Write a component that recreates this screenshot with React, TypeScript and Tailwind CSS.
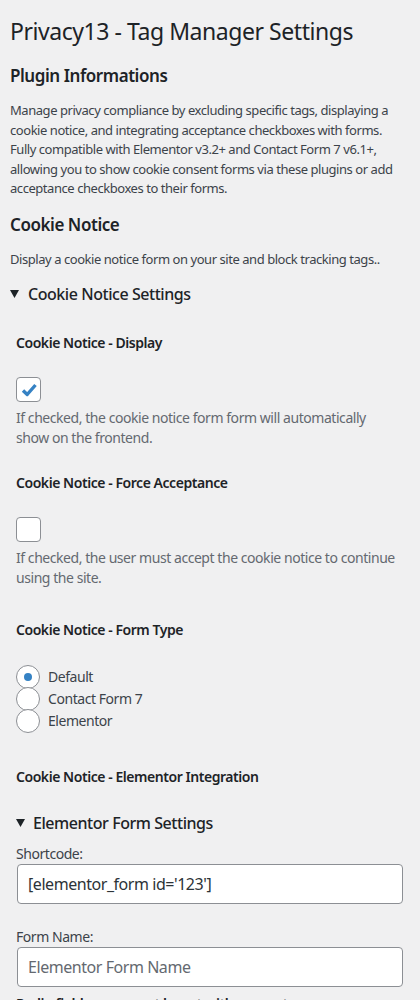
import React from 'react';

const font = { fontFamily: '"Noto Sans", "Open Sans", Arial, sans-serif' };

const Triangle: React.FC = () => (
  <svg width="9" height="8" viewBox="0 0 9 8" className="shrink-0">
    <polygon points="0,0 9,0 4.5,8" fill="#1d2327" />
  </svg>
);

const Checkbox: React.FC<{ checked?: boolean }> = ({ checked }) => (
  <div className="w-[25px] h-[25px] rounded-[4px] border border-[#8c8f94] bg-white flex items-center justify-center">
    {checked && (
      <svg width="20" height="20" viewBox="0 0 20 20">
        <path d="M4 10.5 L8.2 14.5 L16.5 5" fill="none" stroke="#3582c4" strokeWidth="3.4" strokeLinejoin="round" />
      </svg>
    )}
  </div>
);

const Radio: React.FC<{ label: string; checked?: boolean }> = ({ label, checked }) => (
  <div className="flex items-center h-[22px] gap-2">
    <div className="w-[24px] h-[24px] shrink-0 rounded-full border border-[#8c8f94] bg-white flex items-center justify-center">
      {checked && <div className="w-[8px] h-[8px] rounded-full bg-[#3582c4]" />}
    </div>
    <span className="text-[14px] leading-[20px] text-[#3c434a]">{label}</span>
  </div>
);

const FieldTitle: React.FC<{ children: React.ReactNode; className?: string }> = ({ children, className }) => (
  <div className={`text-[14px] leading-[20px] font-semibold text-[#1d2327] whitespace-nowrap ${className ?? ''}`}>{children}</div>
);

const Description: React.FC<{ children: React.ReactNode }> = ({ children }) => (
  <p className="mt-[6px] pr-[12px] text-[14px] leading-[20px] text-[#646970]">{children}</p>
);

export default function App() {
  return (
    <div style={font} className="bg-[#f0f0f1] min-h-screen px-[10px] pt-4 overflow-hidden tracking-[-0.028em]">
      <h1 className="text-[23px] leading-[30px] font-normal text-[#1d2327]">Privacy13 - Tag Manager Settings</h1>

      <h2 className="mt-[19px] text-[17px] leading-[22px] font-semibold text-[#1d2327]">Plugin Informations</h2>
      <p className="mt-[14px] text-[13px] leading-[19.5px] text-[#3c434a]">
        Manage privacy compliance by excluding specific tags, displaying a cookie notice, and integrating acceptance
        checkboxes with forms. Fully compatible with Elementor v3.2+ and Contact Form 7 v6.1+, allowing you to show
        cookie consent forms via these plugins or add acceptance checkboxes to their forms.
      </p>

      <h2 className="mt-[15px] text-[17px] leading-[22px] font-semibold text-[#1d2327]">Cookie Notice</h2>
      <p className="mt-[14px] text-[13px] leading-[19.5px] text-[#3c434a]">
        Display a cookie notice form on your site and block tracking tags..
      </p>

      <div className="mt-[13px] flex items-center gap-[9px] text-[16px] leading-[24px] font-medium text-[#1d2327]">
        <Triangle />
        <span>Cookie Notice Settings</span>
      </div>

      <div className="pl-[6px]">
        <FieldTitle className="mt-[27px]">Cookie Notice - Display</FieldTitle>
        <div className="mt-[24px]">
          <Checkbox checked />
        </div>
        <Description>If checked, the cookie notice form form will automatically show on the frontend.</Description>

        <FieldTitle className="mt-[25px]">Cookie Notice - Force Acceptance</FieldTitle>
        <div className="mt-[24px]">
          <Checkbox />
        </div>
        <Description>If checked, the user must accept the cookie notice to continue using the site.</Description>

        <FieldTitle className="mt-[32px]">Cookie Notice - Form Type</FieldTitle>
        <div className="mt-[26px] flex flex-col">
          <Radio label="Default" checked />
          <Radio label="Contact Form 7" />
          <Radio label="Elementor" />
        </div>

        <FieldTitle className="mt-[35px]">Cookie Notice - Elementor Integration</FieldTitle>

        <div className="mt-[24px] flex items-center gap-[8px] text-[16px] leading-[24px] font-medium text-[#1d2327]">
          <Triangle />
          <span>Elementor Form Settings</span>
        </div>

        <div className="mt-[9px] text-[14px] leading-[20px] text-[#3c434a]">Shortcode:</div>
        <input
          readOnly
          value="[elementor_form id='123']"
          className="ml-px w-[386px] h-[40px] rounded-[4px] border border-[#8c8f94] bg-white px-[10px] text-[16px] text-[#2c3338] tracking-[-0.028em] outline-none"
          style={font}
        />

        <div className="mt-[23px] text-[14px] leading-[20px] text-[#3c434a]">Form Name:</div>
        <input
          readOnly
          placeholder="Elementor Form Name"
          className="ml-px w-[386px] h-[40px] rounded-[4px] border border-[#8c8f94] bg-white px-[10px] text-[16px] text-[#2c3338] tracking-[-0.028em] placeholder:text-[#646970] outline-none"
          style={font}
        />

        <FieldTitle className="mt-[7px]">Radio field name must be set with consent</FieldTitle>
      </div>
    </div>
  );
}
